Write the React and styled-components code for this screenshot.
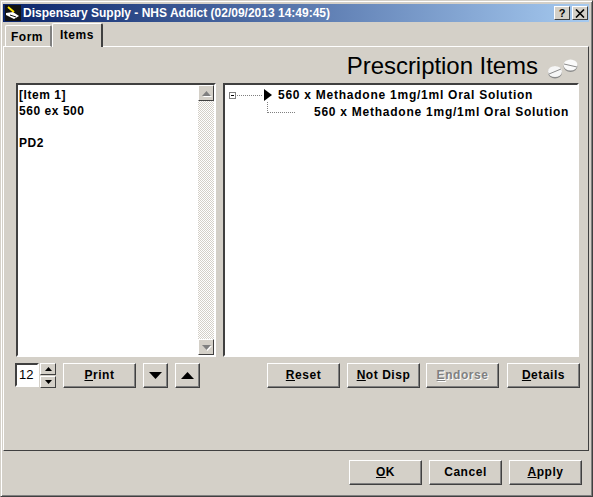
import React from "react";
import styled, { createGlobalStyle } from "styled-components";

const Global = createGlobalStyle`
  html, body { margin: 0; padding: 0; background: #d4d0c8; }
  body { width: 593px; height: 497px; overflow: hidden; }
`;
const Win = styled.div`
  width: 593px; height: 497px; box-sizing: border-box; background: #d4d0c8;
  border: 1px solid; border-color: #d4d0c8 #404040 #404040 #d4d0c8;
  box-shadow: inset 1px 1px 0 #fff, inset -1px -1px 0 #808080;
  padding: 3px 3px 3px 2px; display: flex; flex-direction: column;
  font: bold 12px "Liberation Sans", Arial, sans-serif; color: #000;
`;
const Title = styled.div`
  height: 18px; flex: none; display: flex; align-items: center; padding: 0 1px 0 2px;
  background: linear-gradient(90deg, #0a246a, #a6caf0); color: #fff; font-size: 12px;
`;
const TitleText = styled.span` margin-left: 2px; flex: 1; white-space: nowrap; `;
const CapBtn = styled.div`
  width: 16px; height: 14px; box-sizing: border-box; background: #d4d0c8; color: #000;
  border: 1px solid; border-color: #fff #404040 #404040 #fff; display: flex; align-items: center; justify-content: center;
  margin-left: ${p => p.$gap || 0}px; font-size: 11px;
`;
const TabBar = styled.div` height: 24px; flex: none; display: flex; align-items: flex-end; padding-left: 2px; margin-top: 1px; position: relative; z-index: 1; margin-bottom: -1px; `;
const Tab = styled.div`
  box-sizing: border-box; height: ${p => p.$on ? 24 : 22}px; width: ${p => p.$on ? 51 : 47}px;
  border: 1px solid #fff; border-right: 2px solid ${p => p.$on ? "#404040" : "#808080"}; border-bottom: ${p => p.$on ? "none" : "1px solid #fff"};
  border-radius: 2px 2px 0 0; background: #d4d0c8; display: flex; align-items: center; justify-content: center;
  padding-top: ${p => p.$on ? 0 : 1}px; padding-bottom: ${p => p.$on ? 2 : 0}px; padding-right: ${p => p.$on ? 0 : 2}px; letter-spacing: .55px;
`;
const Panel = styled.div`
  height: 405px; flex: none; box-sizing: border-box; border: 1px solid; border-color: #fff #404040 #404040 #fff;
  padding: 5px 10px 0 12px; display: flex; flex-direction: column;
`;
const Head = styled.div` height: 31px; flex: none; display: flex; justify-content: flex-end; align-items: flex-start; gap: 8px; `;
const HeadText = styled.span` font: 400 24px/28px "Liberation Sans", Arial, sans-serif; letter-spacing: -.05px; `;
const Lists = styled.div` height: 274px; flex: none; display: grid; grid-template-columns: 200px 356px; gap: 7px; `;
const Sunken = styled.div`
  box-sizing: border-box; background: #fff; border: 2px solid; border-color: #404040 #fff #fff #404040;
  position: relative; display: flex; min-height: 0;
`;
const Memo = styled.div` flex: 1; padding: 2px 1px; line-height: 16px; letter-spacing: .55px; white-space: pre; `;
const Scroll = styled.div`
  width: 16px; flex: none; display: flex; flex-direction: column; justify-content: space-between;
  background: repeating-conic-gradient(#d4d0c8 0 25%, #fff 0 50%) 0 0 / 2px 2px;
`;
const ScrollBtn = styled.div`
  width: 16px; height: 16px; box-sizing: border-box; background: #d4d0c8; border: 1px solid;
  border-color: #fff #404040 #404040 #fff; display: flex; align-items: center; justify-content: center;
  svg { filter: drop-shadow(1px 1px 0 #fff); }
`;
const Tree = styled.div` flex: 1; position: relative; padding: 2px 0 0 4px; letter-spacing: .75px; `;
const Node = styled.div` height: 16px; line-height: 16px; display: flex; align-items: center; white-space: nowrap; margin-left: ${p => p.$in}px; margin-top: ${p => p.$top || 0}px; `;
const Expander = styled.span`
  width: 7px; height: 7px; box-sizing: border-box; border: 1px solid #808080; position: relative; flex: none;
  &::after { content: ""; position: absolute; left: 1px; right: 1px; top: 2px; height: 1px; background: #000; }
`;
const Dots = styled.span` width: ${p => p.$w}px; margin-left: 1px; border-top: 1px dotted #808080; flex: none; `;
const Elbow = styled.span`
  width: 27px; height: 10px; flex: none; margin: -10px 19px 0 0; border-left: 1px dotted #808080; border-bottom: 1px dotted #808080;
`;
const Controls = styled.div` display: flex; align-items: flex-start; margin-top: 6px; width: 564px; `;
const SpinBox = styled.div`
  width: 24px; height: 24px; flex: none; box-sizing: border-box; background: #fff; border: 2px solid; border-color: #404040 #fff #fff #404040;
  font-weight: 400; font-size: 13px; padding: 2px 0 0 2px; margin-left: -1px;
`;
const Spin = styled.div` width: 16px; flex: none; margin-left: 1px; display: flex; flex-direction: column; gap: 1px; `;
const SpinBtn = styled.div`
  height: 12px; box-sizing: border-box; background: #d4d0c8; border: 1px solid; border-color: #fff #404040 #404040 #fff;
  display: flex; align-items: center; justify-content: center;
`;
const Btn = styled.div`
  width: ${p => p.$w || 73}px; height: 25px; box-sizing: border-box; background: #d4d0c8; flex: none;
  border: 1px solid; border-color: #fff #404040 #404040 #fff; box-shadow: inset -1px -1px 0 #808080;
  display: flex; align-items: center; justify-content: center; letter-spacing: .55px;
  margin-left: ${p => p.$ml ?? 0}px; padding-bottom: 1px;
  color: ${p => p.$off ? "#808080" : "#000"}; text-shadow: ${p => p.$off ? "1px 1px 0 #fff" : "none"};
`;
const Footer = styled.div` flex: 1; display: flex; justify-content: flex-end; padding: 9px 7px 0 0; `;
const Key = styled.u` text-decoration: underline; `;
const Tri = ({ up, s = 7, c = "#000" }) => (
  <svg width={s * 2 + 1} height={s + 1} viewBox={`0 0 ${s * 2 + 1} ${s + 1}`}>
    <path d={up ? `M0 ${s + 1}H${s * 2 + 1}L${s + .5} 0Z` : `M0 0H${s * 2 + 1}L${s + .5} ${s + 1}Z`} fill={c} />
  </svg>
);
const Logo = () => (
  <svg width="16" height="16" viewBox="0 0 16 16">
    <rect width="16" height="16" fill="#111" />
    <path d="M1 8l7-1 6 4-5 3-8-4z" fill="#fff" />
    <path d="M3 2l6 5" stroke="#ffe600" strokeWidth="2" />
    <path d="M5 10l6 2" stroke="#111" />
  </svg>
);
const CloseX = () => (
  <svg width="10" height="9" viewBox="0 0 10 9">
    <path d="M1 0.5L9 8.5M9 0.5L1 8.5" stroke="#000" strokeWidth="1.6" fill="none" />
  </svg>
);
const Pills = () => (
  <svg width="32" height="20" viewBox="0 0 32 20" style={{ marginTop: 7 }}>
    <ellipse cx="9" cy="13.5" rx="7" ry="6" fill="#8a8a8a" />
    <ellipse cx="9" cy="12.5" rx="7" ry="5.5" fill="#f6f6f6" />
    <path d="M3 15L15 10" stroke="#8c8c8c" />
    <ellipse cx="24.5" cy="7" rx="7" ry="6" fill="#8a8a8a" />
    <ellipse cx="24.5" cy="6" rx="7" ry="5.5" fill="#fafafa" />
    <path d="M18 5L31 8" stroke="#8c8c8c" />
  </svg>
);

export default function App() {
  return (
    <Win>
      <Global />
      <Title>
        <Logo />
        <TitleText>Dispensary Supply - NHS Addict (02/09/2013 14:49:45)</TitleText>
        <CapBtn>?</CapBtn>
        <CapBtn $gap={2}><CloseX /></CapBtn>
      </Title>
      <TabBar>
        <Tab>Form</Tab>
        <Tab $on>Items</Tab>
      </TabBar>
      <Panel>
        <Head>
          <HeadText>Prescription Items</HeadText>
          <Pills />
        </Head>
        <Lists>
          <Sunken>
            <Memo>{"[Item 1]\n560 ex 500\n\nPD2"}</Memo>
            <Scroll>
              <ScrollBtn><Tri up s={4} c="#808080" /></ScrollBtn>
              <ScrollBtn><Tri s={4} c="#808080" /></ScrollBtn>
            </Scroll>
          </Sunken>
          <Sunken>
            <Tree>
              <Node $in={0}>
                <Expander />
                <Dots $w={25} />
              </Node>
              <Node $in={35} $top={-16}>
                <svg width="8" height="12" viewBox="0 0 8 12" style={{ marginRight: 6 }}><path d="M0 0V12L8 6Z" /></svg>
                560 x Methadone 1mg/1ml Oral Solution
              </Node>
              <Node $in={38} $top={1}>
                <Elbow />
                560 x Methadone 1mg/1ml Oral Solution
              </Node>
            </Tree>
          </Sunken>
        </Lists>
        <Controls>
          <SpinBox>12</SpinBox>
          <Spin>
            <SpinBtn><Tri up s={3} /></SpinBtn>
            <SpinBtn><Tri s={3} /></SpinBtn>
          </Spin>
          <Btn $ml={7}><span><Key>P</Key>rint</span></Btn>
          <Btn $w={25} $ml={7}><Tri s={6} /></Btn>
          <Btn $w={25} $ml={7}><Tri up s={6} /></Btn>
          <Btn $ml={67}><span><Key>R</Key>eset</span></Btn>
          <Btn $ml={7}><span><Key>N</Key>ot Disp</span></Btn>
          <Btn $ml={6} $off><span><Key>E</Key>ndorse</span></Btn>
          <Btn $ml={8}><span><Key>D</Key>etails</span></Btn>
        </Controls>
      </Panel>
      <Footer>
        <Btn><span><Key>O</Key>K</span></Btn>
        <Btn $ml={7}>Cancel</Btn>
        <Btn $ml={7}><span><Key>A</Key>pply</span></Btn>
      </Footer>
    </Win>
  );
}
